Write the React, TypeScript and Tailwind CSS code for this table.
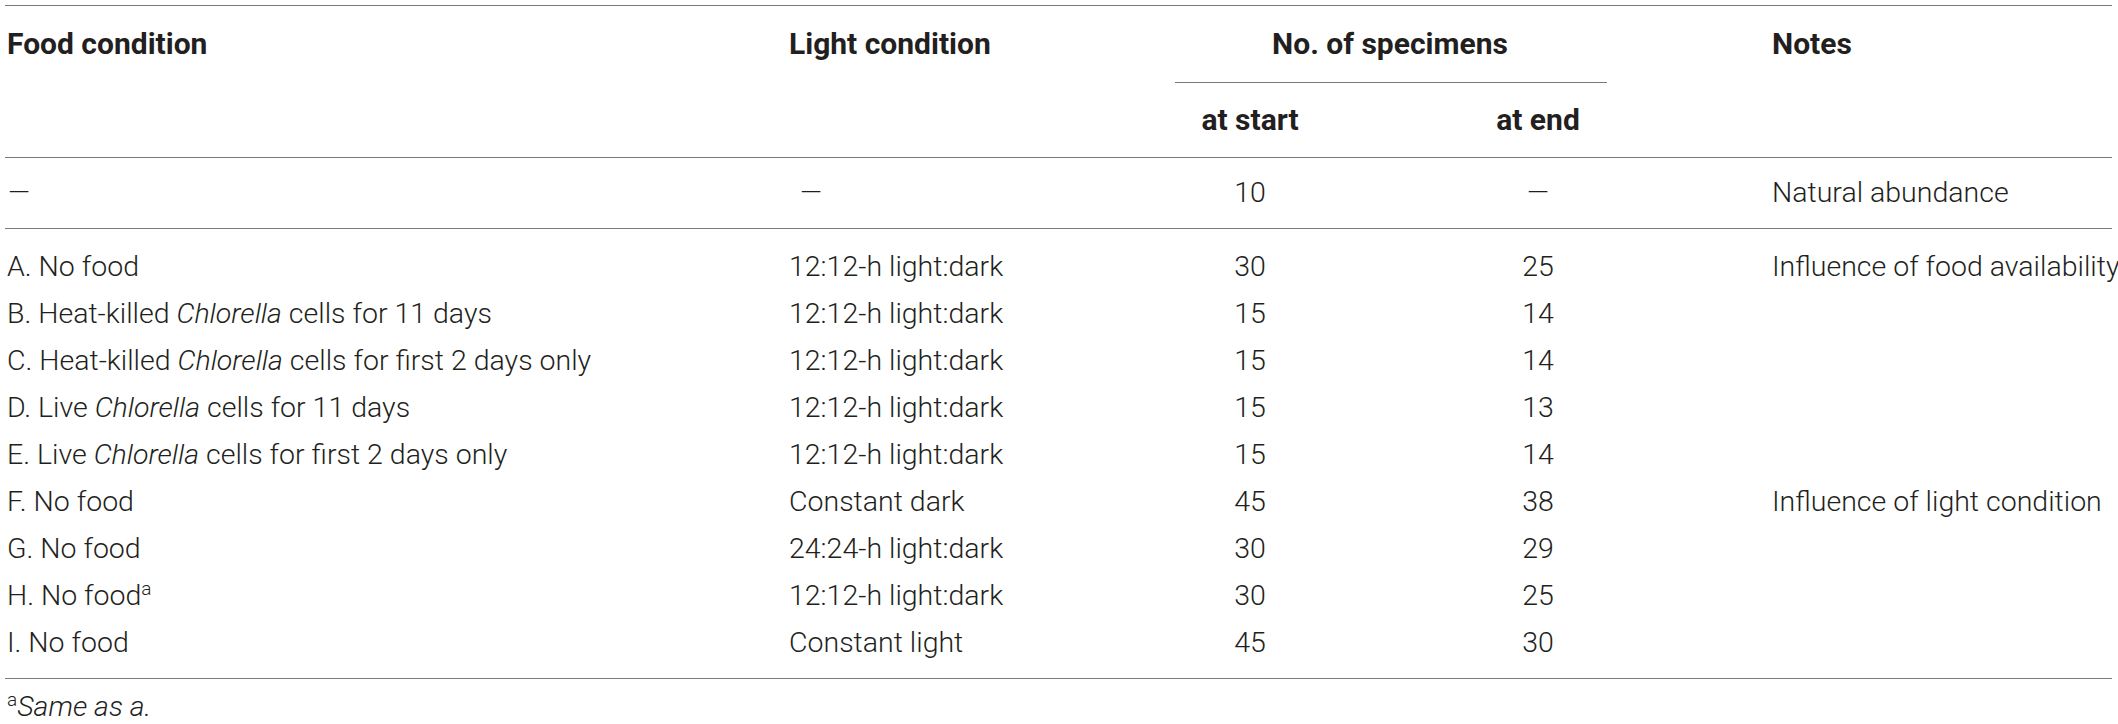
const rows: { food: React.ReactNode; light: string; start: string; end: string; note?: string }[] = [
  { food: 'A. No food', light: '12:12-h light:dark', start: '30', end: '25', note: 'Influence of food availability' },
  { food: <>B. Heat-killed <i>Chlorella</i> cells for 11 days</>, light: '12:12-h light:dark', start: '15', end: '14' },
  { food: <>C. Heat-killed <i>Chlorella</i> cells for first 2 days only</>, light: '12:12-h light:dark', start: '15', end: '14' },
  { food: <>D. Live <i>Chlorella</i> cells for 11 days</>, light: '12:12-h light:dark', start: '15', end: '13' },
  { food: <>E. Live <i>Chlorella</i> cells for first 2 days only</>, light: '12:12-h light:dark', start: '15', end: '14' },
  { food: 'F. No food', light: 'Constant dark', start: '45', end: '38', note: 'Influence of light condition' },
  { food: 'G. No food', light: '24:24-h light:dark', start: '30', end: '29' },
  { food: <>H. No food<sup className="text-[19px] -top-[10px]">a</sup></>, light: '12:12-h light:dark', start: '30', end: '25' },
  { food: 'I. No food', light: 'Constant light', start: '45', end: '30' },
]

const cols = 'grid grid-cols-[784px_341px_240px_336px_1fr]'

export default function App() {
  return (
    <div className="w-[2118px] h-[724px] bg-white pl-[5px] pr-[6px] pt-[5px] font-['Roboto','Liberation_Sans',sans-serif] text-[28.5px] text-[#231f20] leading-[32px]">
      {/* header */}
      <div className="border-t border-b border-[#7a7a7a]">
        <div className={`${cols} font-bold text-[30px]`}>
          <div className="row-span-2 h-[76px] flex items-center pl-[2px]">Food condition</div>
          <div className="row-span-2 h-[76px] flex items-center">Light condition</div>
          <div className="col-span-2 h-[76px] flex items-center justify-center pr-[56px]">No. of specimens</div>
          <div className="row-span-2 h-[76px] flex items-center pl-[66px]">Notes</div>
          <div className="col-span-2 col-start-3 h-[75px] flex flex-col">
            <div className="ml-[45px] mr-[99px] border-t border-[#7a7a7a]" />
            <div className="flex flex-1 items-center">
              <div className="w-[240px] text-center">at start</div>
              <div className="w-[336px] text-center">at end</div>
            </div>
          </div>
        </div>
      </div>

      {/* natural abundance row */}
      <div className={`${cols} h-[71px] items-center font-light border-b border-[#7a7a7a]`}>
        <div className="pl-[3px]">—</div>
        <div className="pl-[11px]">—</div>
        <div className="text-center">10</div>
        <div className="text-center">—</div>
        <div className="pl-[66px]">Natural abundance</div>
      </div>

      {/* experiment rows */}
      <div className="pt-[14px] pb-[12px] border-b border-[#7a7a7a] font-light">
        {rows.map((r, i) => (
          <div key={i} className={`${cols} h-[47px] items-center`}>
            <div className="pl-[2px]">{r.food}</div>
            <div>{r.light}</div>
            <div className="text-center">{r.start}</div>
            <div className="text-center">{r.end}</div>
            <div className="pl-[66px] whitespace-nowrap">{r.note}</div>
          </div>
        ))}
      </div>

      <div className="pt-[12px] pl-[2px] font-light">
        <sup className="text-[19px] -top-[10px]">a</sup>
        <i>Same as a.</i>
      </div>
    </div>
  )
}
